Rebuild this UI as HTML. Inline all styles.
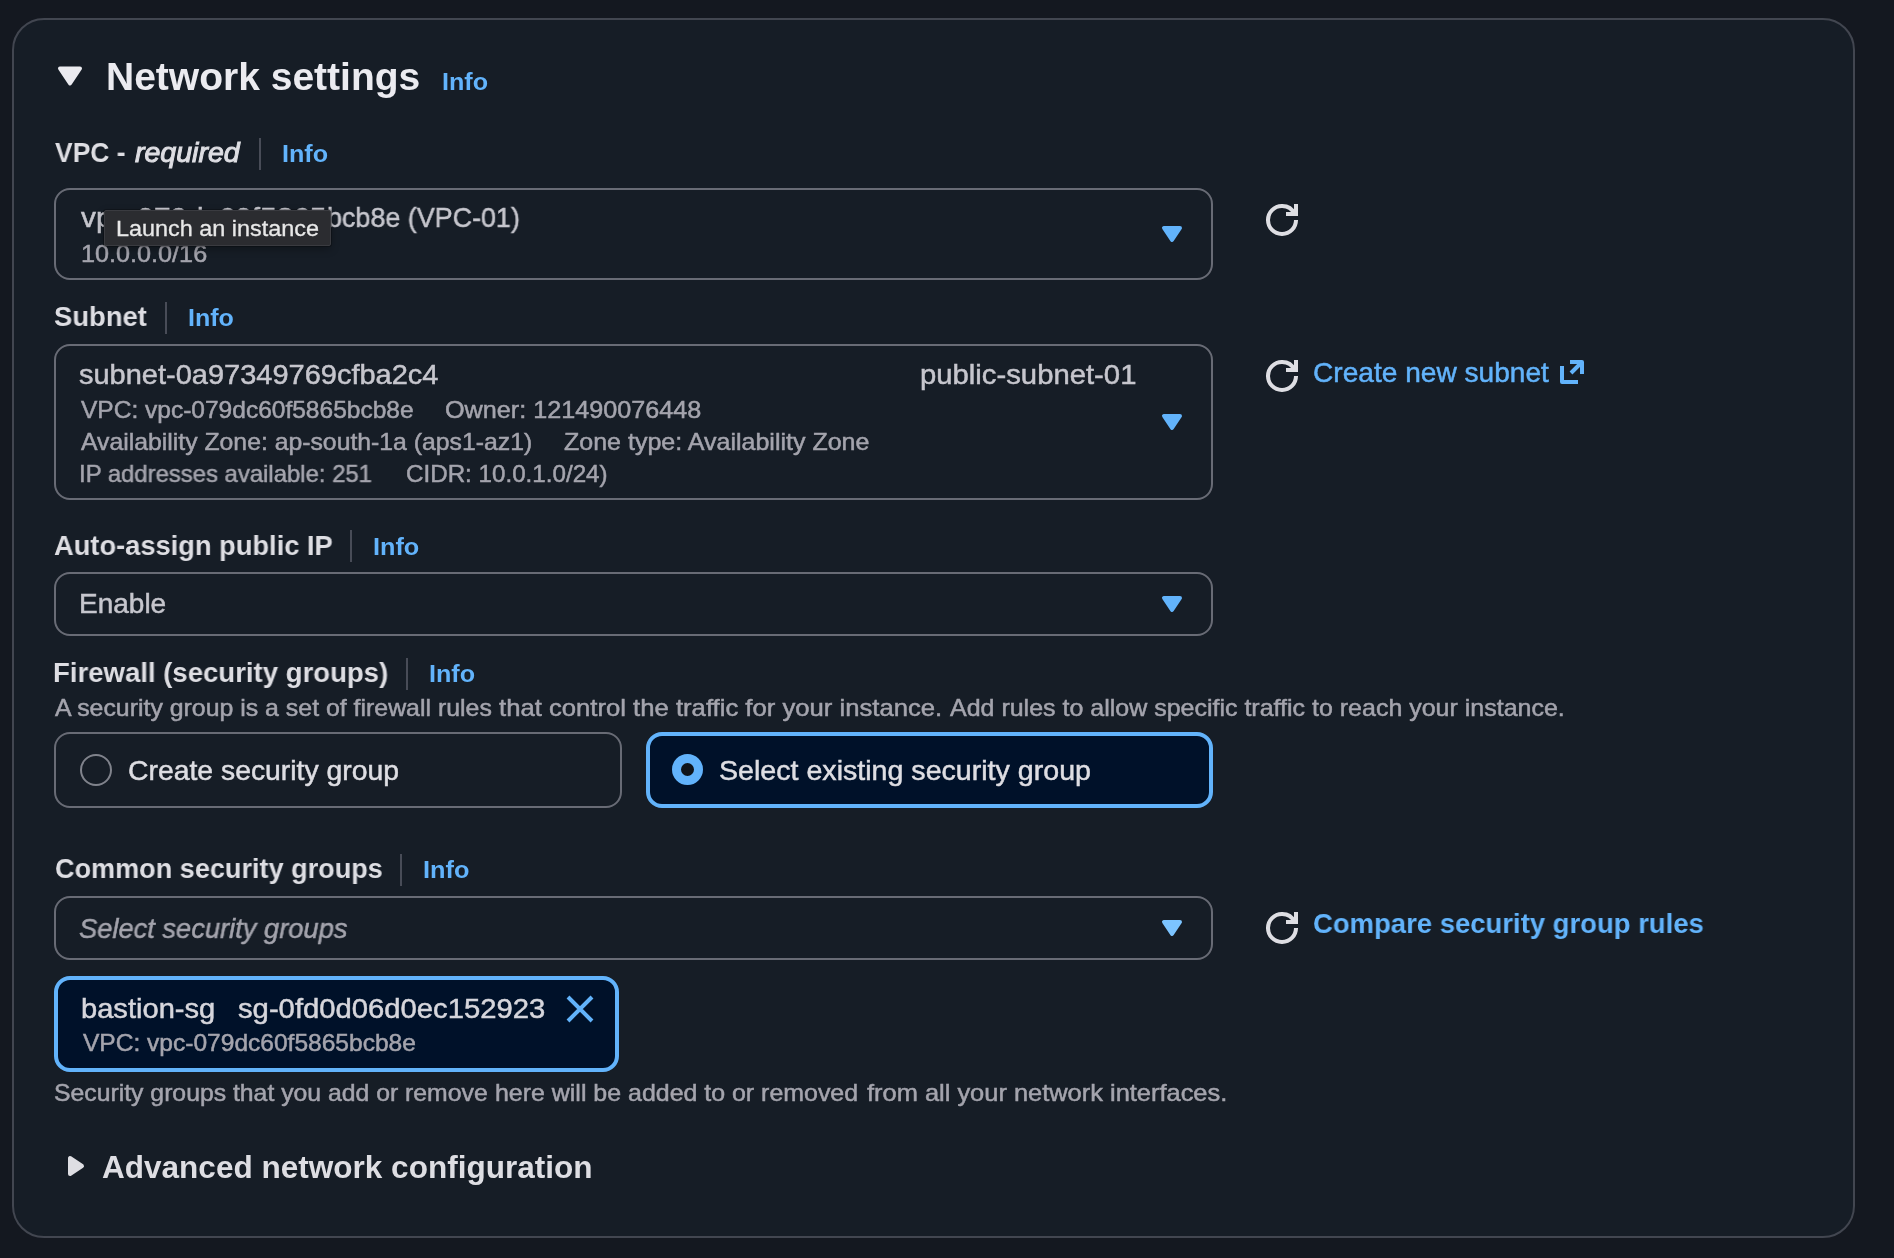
<!DOCTYPE html><html><head><meta charset="utf-8"><title>Launch an instance</title><style>
html,body{margin:0;padding:0}body{width:1894px;height:1258px;overflow:hidden;background:#141820;position:relative;font-family:'Liberation Sans', sans-serif}
.t{position:absolute;white-space:pre;line-height:1;transform-origin:0 0;will-change:transform}
.d{position:absolute;width:2px;background:#484c57}
</style></head><body>
<div style="position:absolute;left:12px;top:18px;width:1839px;height:1216px;border:2px solid #424650;border-radius:32px;background:#161d26;"></div>
<div style="position:absolute;left:54px;top:188px;width:1155px;height:88px;border:2px solid #686b75;border-radius:16px;background:transparent;"></div>
<div style="position:absolute;left:54px;top:344px;width:1155px;height:152px;border:2px solid #686b75;border-radius:16px;background:transparent;"></div>
<div style="position:absolute;left:54px;top:572px;width:1155px;height:60px;border:2px solid #686b75;border-radius:16px;background:transparent;"></div>
<div style="position:absolute;left:54px;top:896px;width:1155px;height:60px;border:2px solid #686b75;border-radius:16px;background:transparent;"></div>
<div style="position:absolute;left:54px;top:732px;width:564px;height:72px;border:2px solid #686b75;border-radius:16px;background:transparent;"></div>
<div style="position:absolute;left:646px;top:732px;width:559px;height:68px;border:4px solid #62b3fb;border-radius:16px;background:#001129;"></div>
<div style="position:absolute;left:54px;top:976px;width:557px;height:88px;border:4px solid #62b3fb;border-radius:16px;background:#001129;"></div>
<div class="d" style="left:259px;top:138px;height:32px"></div>
<div class="d" style="left:164.5px;top:302px;height:32px"></div>
<div class="d" style="left:349.5px;top:530px;height:32px"></div>
<div class="d" style="left:405.5px;top:658px;height:32px"></div>
<div class="d" style="left:399.5px;top:854px;height:32px"></div>
<svg style="position:absolute;left:50px;top:56px" width="40" height="40" viewBox="0 0 16 16" fill="#ebebf0" stroke="#ebebf0" stroke-width="1.6" stroke-linejoin="round"><path d="M4 5h8l-4 6-4-6Z"/></svg>
<svg style="position:absolute;left:60px;top:1150px" width="32" height="32" viewBox="0 0 16 16" fill="#dedee3" stroke="#dedee3" stroke-width="2" stroke-linejoin="round"><path d="M5 4v8l6-4-6-4Z"/></svg>
<svg style="position:absolute;left:1156px;top:218px" width="32" height="32" viewBox="0 0 16 16" fill="#62b3fb" stroke="#62b3fb" stroke-width="2" stroke-linejoin="round"><path d="M4 5h8l-4 6-4-6Z"/></svg>
<svg style="position:absolute;left:1156px;top:406px" width="32" height="32" viewBox="0 0 16 16" fill="#62b3fb" stroke="#62b3fb" stroke-width="2" stroke-linejoin="round"><path d="M4 5h8l-4 6-4-6Z"/></svg>
<svg style="position:absolute;left:1156px;top:588px" width="32" height="32" viewBox="0 0 16 16" fill="#62b3fb" stroke="#62b3fb" stroke-width="2" stroke-linejoin="round"><path d="M4 5h8l-4 6-4-6Z"/></svg>
<svg style="position:absolute;left:1156px;top:912px" width="32" height="32" viewBox="0 0 16 16" fill="#7cc4ff" stroke="#7cc4ff" stroke-width="2" stroke-linejoin="round"><path d="M4 5h8l-4 6-4-6Z"/></svg>
<svg style="position:absolute;left:1266px;top:204px" width="32" height="32" viewBox="0 0 16 16" fill="none" stroke="#dedee3" stroke-width="2" stroke-linejoin="round"><path d="M15 8a6.957 6.957 0 0 1-7 7 6.957 6.957 0 0 1-7-7 6.957 6.957 0 0 1 7-7 6.87 6.87 0 0 1 6.3 4"/><path d="M10 5h5V0" stroke-linejoin="miter"/></svg>
<svg style="position:absolute;left:1266px;top:360px" width="32" height="32" viewBox="0 0 16 16" fill="none" stroke="#dedee3" stroke-width="2" stroke-linejoin="round"><path d="M15 8a6.957 6.957 0 0 1-7 7 6.957 6.957 0 0 1-7-7 6.957 6.957 0 0 1 7-7 6.87 6.87 0 0 1 6.3 4"/><path d="M10 5h5V0" stroke-linejoin="miter"/></svg>
<svg style="position:absolute;left:1266px;top:912px" width="32" height="32" viewBox="0 0 16 16" fill="none" stroke="#dedee3" stroke-width="2" stroke-linejoin="round"><path d="M15 8a6.957 6.957 0 0 1-7 7 6.957 6.957 0 0 1-7-7 6.957 6.957 0 0 1 7-7 6.87 6.87 0 0 1 6.3 4"/><path d="M10 5h5V0" stroke-linejoin="miter"/></svg>
<svg style="position:absolute;left:1558px;top:358px" width="32" height="32" viewBox="0 0 16 16" fill="none" stroke="#62b3fb" stroke-width="2" stroke-linejoin="round"><path d="M2 4V12H10M6 2H12V8M12 2L6.5 7.5"/></svg>
<svg style="position:absolute;left:564px;top:993px" width="32" height="32" viewBox="0 0 16 16" fill="none" stroke="#62b3fb" stroke-width="2" stroke-linejoin="round"><path d="m2 2 12 12M14 2 2 14"/></svg>
<div style="position:absolute;left:80px;top:754px;width:28px;height:28px;border:2px solid #80838c;border-radius:50%"></div>
<div style="position:absolute;left:672px;top:754px;width:13px;height:13px;border:9.5px solid #62b3fb;border-radius:50%;background:#0f141a"></div>
<span class="t" style="left:106.20px;top:56.90px;font-size:39px;color:#ebebf0;transform:scaleX(0.9987);font-weight:700">Network settings</span>
<span class="t" style="left:441.95px;top:70.00px;font-size:24px;color:#62b3fb;transform:scaleX(1.0476);font-weight:700">Info</span>
<div><span class="t" style="left:55.00px;top:138.50px;font-size:28px;color:#dedee3;transform:scaleX(0.9459);font-weight:700">VPC - </span><span class="t" style="left:135.00px;top:138.50px;font-size:28px;color:#dedee3;transform:scaleX(1.0192);-webkit-text-stroke:1px;font-style:italic">required</span></div>
<span class="t" style="left:281.95px;top:141.50px;font-size:24px;color:#62b3fb;transform:scaleX(1.0476);font-weight:700">Info</span>
<div><span class="t" style="left:80.50px;top:204.30px;font-size:28px;color:#c6c6cd;transform:scaleX(1.0652);-webkit-text-stroke:.5px">vpc-079dc60f5865</span><span class="t" style="left:326.64px;top:204.30px;font-size:28px;color:#c6c6cd;transform:scaleX(0.9608);-webkit-text-stroke:.5px">bcb8e (VPC-01)</span></div>
<span class="t" style="left:81.45px;top:242.00px;font-size:24px;color:#a4a4ad;transform:scaleX(1.0504);-webkit-text-stroke:.5px">10.0.0.0/16</span>
<span class="t" style="left:54.02px;top:303.20px;font-size:28px;color:#dedee3;transform:scaleX(0.9787);font-weight:700">Subnet</span>
<span class="t" style="left:188.16px;top:306.20px;font-size:24px;color:#62b3fb;transform:scaleX(1.0429);font-weight:700">Info</span>
<span class="t" style="left:79.46px;top:360.70px;font-size:28px;color:#c6c6cd;transform:scaleX(1.0353);-webkit-text-stroke:.5px">subnet-0a97349769cfba2c4</span>
<span class="t" style="left:920.15px;top:360.70px;font-size:28px;color:#c6c6cd;transform:scaleX(1.0454);-webkit-text-stroke:.5px">public-subnet-01</span>
<span class="t" style="left:80.50px;top:397.50px;font-size:24px;color:#a4a4ad;transform:scaleX(1.0215);-webkit-text-stroke:.5px">VPC: vpc-079dc60f5865bcb8e</span>
<span class="t" style="left:445.15px;top:397.50px;font-size:24px;color:#a4a4ad;transform:scaleX(1.0494);-webkit-text-stroke:.5px">Owner: 121490076448</span>
<span class="t" style="left:80.50px;top:430.00px;font-size:24px;color:#a4a4ad;transform:scaleX(1.0321);-webkit-text-stroke:.5px">Availability Zone: ap-south-1a (aps1-az1)</span>
<span class="t" style="left:563.70px;top:430.00px;font-size:24px;color:#a4a4ad;transform:scaleX(1.0421);-webkit-text-stroke:.5px">Zone type: Availability Zone</span>
<span class="t" style="left:78.51px;top:462.00px;font-size:24px;color:#a4a4ad;transform:scaleX(0.9949);-webkit-text-stroke:.5px">IP addresses available: 251</span>
<span class="t" style="left:405.99px;top:462.00px;font-size:24px;color:#a4a4ad;transform:scaleX(1.0076);-webkit-text-stroke:.5px">CIDR: 10.0.1.0/24)</span>
<span class="t" style="left:1313.00px;top:358.70px;font-size:28px;color:#62b3fb;transform:scaleX(1.0034);-webkit-text-stroke:.5px">Create new subnet</span>
<span class="t" style="left:53.53px;top:531.50px;font-size:28px;color:#dedee3;transform:scaleX(0.9737);font-weight:700">Auto-assign public IP</span>
<span class="t" style="left:373.45px;top:534.50px;font-size:24px;color:#62b3fb;transform:scaleX(1.0524);font-weight:700">Info</span>
<span class="t" style="left:79.20px;top:590.00px;font-size:28px;color:#c6c6cd;transform:scaleX(0.9976);-webkit-text-stroke:.5px">Enable</span>
<span class="t" style="left:53.03px;top:659.00px;font-size:28px;color:#dedee3;transform:scaleX(0.9837);font-weight:700">Firewall (security groups)</span>
<span class="t" style="left:429.45px;top:662.00px;font-size:24px;color:#62b3fb;transform:scaleX(1.0476);font-weight:700">Info</span>
<div><span class="t" style="left:54.50px;top:696.00px;font-size:24px;color:#a4a4ad;transform:scaleX(1.0363);-webkit-text-stroke:.5px">A security group is a set of firewall rules </span><span class="t" style="left:499.10px;top:696.00px;font-size:24px;color:#a4a4ad;transform:scaleX(1.0695);-webkit-text-stroke:.5px">that control the traffic for your instance. </span><span class="t" style="left:949.80px;top:696.00px;font-size:24px;color:#a4a4ad;transform:scaleX(1.0411);-webkit-text-stroke:.5px">Add rules to allow specific traffic to reach your instance.</span></div>
<span class="t" style="left:127.69px;top:757.00px;font-size:28px;color:#dedee3;transform:scaleX(1.0124);-webkit-text-stroke:.5px">Create security group</span>
<span class="t" style="left:719.28px;top:757.00px;font-size:28px;color:#dedee3;transform:scaleX(1.0213);-webkit-text-stroke:.5px">Select existing security group</span>
<span class="t" style="left:54.53px;top:855.00px;font-size:28px;color:#dedee3;transform:scaleX(0.9665);font-weight:700">Common security groups</span>
<span class="t" style="left:422.65px;top:858.00px;font-size:24px;color:#62b3fb;transform:scaleX(1.0548);font-weight:700">Info</span>
<span class="t" style="left:79.03px;top:915.30px;font-size:28px;color:#a4a4ad;transform:scaleX(0.9745);-webkit-text-stroke:.5px;font-style:italic">Select security groups</span>
<span class="t" style="left:1313.32px;top:910.40px;font-size:28px;color:#62b3fb;transform:scaleX(0.9811);font-weight:700">Compare security group rules</span>
<span class="t" style="left:81.46px;top:994.50px;font-size:28px;color:#d6d6dc;transform:scaleX(1.0394);-webkit-text-stroke:.5px">bastion-sg</span>
<span class="t" style="left:237.96px;top:994.50px;font-size:28px;color:#d6d6dc;transform:scaleX(1.0444);-webkit-text-stroke:.5px">sg-0fd0d06d0ec152923</span>
<span class="t" style="left:82.50px;top:1031.20px;font-size:24px;color:#a4a4ad;transform:scaleX(1.0225);-webkit-text-stroke:.5px">VPC: vpc-079dc60f5865bcb8e</span>
<div><span class="t" style="left:53.97px;top:1081.00px;font-size:24px;color:#a4a4ad;transform:scaleX(1.0320);-webkit-text-stroke:.5px">Security groups that you add or remove </span><span class="t" style="left:495.36px;top:1081.00px;font-size:24px;color:#a4a4ad;transform:scaleX(1.0388);-webkit-text-stroke:.5px">here will be added to or removed </span><span class="t" style="left:866.80px;top:1081.00px;font-size:24px;color:#a4a4ad;transform:scaleX(1.0592);-webkit-text-stroke:.5px">from all your network interfaces.</span></div>
<span class="t" style="left:101.78px;top:1151.60px;font-size:31px;color:#dedee3;transform:scaleX(1.0171);font-weight:700">Advanced network configuration</span>
<div style="position:absolute;left:103.5px;top:210px;width:225px;height:34px;background:#2b2c30;border:1px solid #3a3b40;border-radius:2px;box-shadow:0 0 0 1px rgba(0,0,0,.25),0 3px 8px rgba(0,0,0,.3)"></div>
<span class="t" style="left:115.74px;top:217.70px;font-size:22px;color:#e8e8e8;transform:scaleX(1.0640);-webkit-text-stroke:.3px">Launch an instance</span>
</body></html>
